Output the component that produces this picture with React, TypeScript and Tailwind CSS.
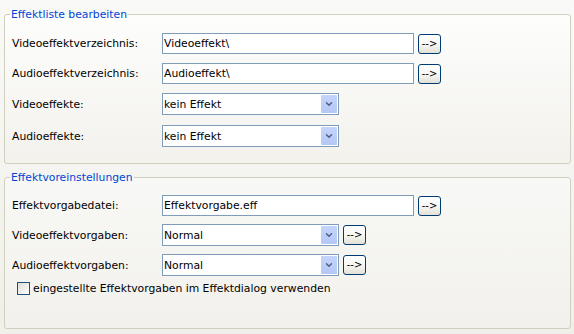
import { ChevronDown } from "lucide-react";

const font = { fontFamily: '"DejaVu Sans", Tahoma, sans-serif' };

function ArrowButton() {
  return (
    <button className="ml-[4px] flex h-[20px] w-[23px] items-center justify-center rounded-[3px] border border-[#003c74] bg-gradient-to-b from-white via-[#f7f7f4] to-[#e3e1d6] text-[10px] leading-none text-black">
      --&gt;
    </button>
  );
}

function TextBox({ value }: { value: string }) {
  return (
    <div className="flex h-[21px] w-[252px] items-center border border-[#7f9db9] bg-white pl-[1px] text-black">
      {value}
    </div>
  );
}

function Combo({ value }: { value: string }) {
  return (
    <div className="flex h-[22px] w-[177px] items-center justify-between border border-[#7f9db9] bg-white pl-[1px] pr-px text-black">
      <span>{value}</span>
      <span className="flex h-[18px] w-[16px] items-center justify-center rounded-[1px] bg-gradient-to-b from-[#c4d5fc] to-[#b4c8f6]">
        <ChevronDown size={10} strokeWidth={3.5} className="text-[#4d6185]" />
      </span>
    </div>
  );
}

function Row({ label, children, mt }: { label: string; children: React.ReactNode; mt: string }) {
  return (
    <div className={`flex items-center pl-[7px] ${mt}`}>
      <div className="w-[150px] text-black">{label}</div>
      {children}
    </div>
  );
}

export default function App() {
  return (
    <div
      style={font}
      className="h-[334px] w-[574px] bg-gradient-to-b from-[#f9f9f8] to-[#f0efe9] pl-[4px] pr-[3px] pt-[8px] text-[10.8px] leading-[13px]"
    >
      <fieldset className="rounded-[3px] border border-[#d0d0bf] bg-gradient-to-b from-[#fdfdfc] to-[#f3f2ed] pb-[16px]">
        <legend className="ml-[5px] px-px leading-[13px] text-[#0046d5]">Effektliste bearbeiten</legend>
        <Row label="Videoeffektverzeichnis:" mt="mt-[12px]">
          <TextBox value="Videoeffekt\" />
          <ArrowButton />
        </Row>
        <Row label="Audioeffektverzeichnis:" mt="mt-[9px]">
          <TextBox value="Audioeffekt\" />
          <ArrowButton />
        </Row>
        <Row label="Videoeffekte:" mt="mt-[9px]">
          <Combo value="kein Effekt" />
        </Row>
        <Row label="Audioeffekte:" mt="mt-[10px]">
          <Combo value="kein Effekt" />
        </Row>
      </fieldset>

      <fieldset className="mt-[7px] rounded-[3px] border border-[#d0d0bf] bg-gradient-to-b from-[#f8f8f6] to-[#f2f1ec] pb-[33px]">
        <legend className="ml-[5px] px-px leading-[13px] text-[#0046d5]">Effektvoreinstellungen</legend>
        <Row label="Effektvorgabedatei:" mt="mt-[11px]">
          <TextBox value="Effektvorgabe.eff" />
          <ArrowButton />
        </Row>
        <Row label="Videoeffektvorgaben:" mt="mt-[8px]">
          <Combo value="Normal" />
          <ArrowButton />
        </Row>
        <Row label="Audioeffektvorgaben:" mt="mt-[8px]">
          <Combo value="Normal" />
          <ArrowButton />
        </Row>
        <label className="mt-[6px] flex items-center pl-[12px] text-black">
          <span className="h-[13px] w-[13px] border border-[#1c5180] bg-gradient-to-br from-[#dcdcd7] to-white" />
          <span className="ml-[3px]">eingestellte Effektvorgaben im Effektdialog verwenden</span>
        </label>
      </fieldset>
    </div>
  );
}
